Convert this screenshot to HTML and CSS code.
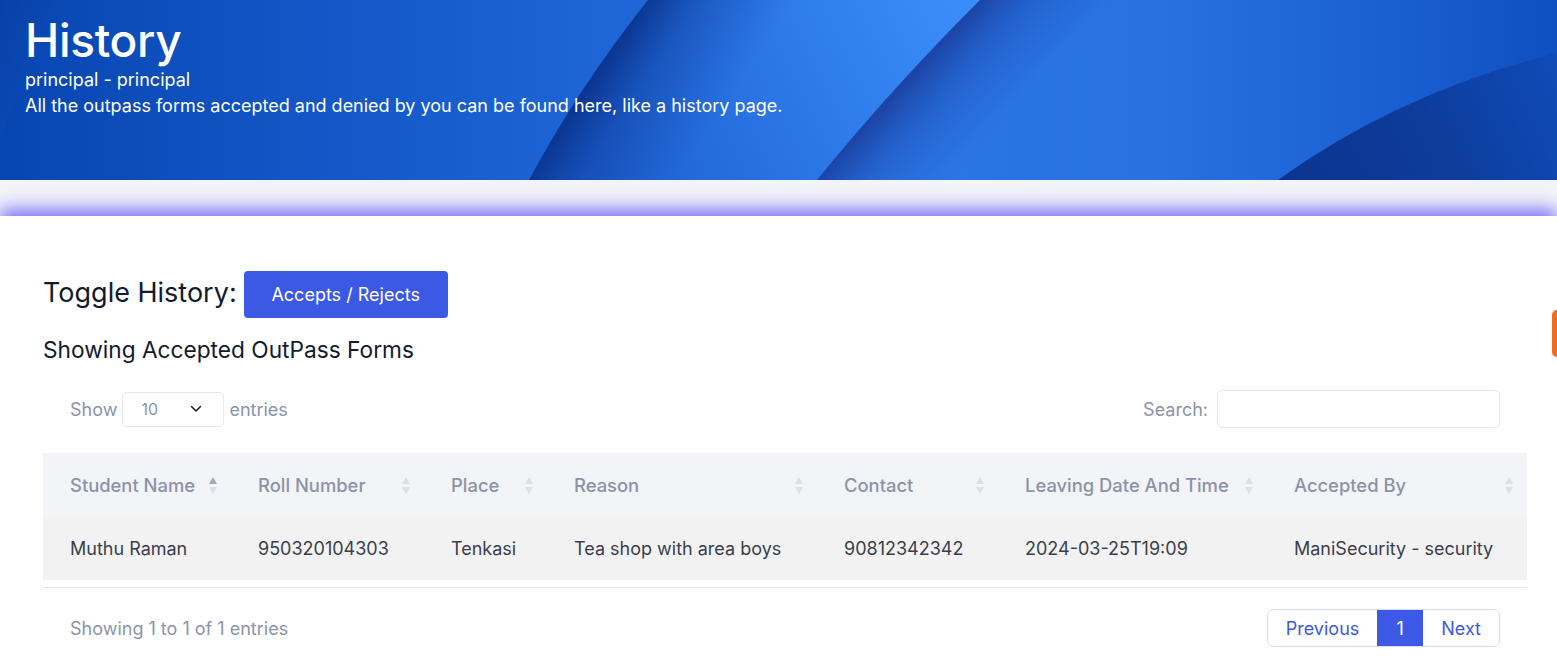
FILE: index.html
```html
<!DOCTYPE html>
<html lang="en">
<head>
<meta charset="utf-8">
<title>History</title>
<link rel="stylesheet" href="styles.css">
</head>
<body>
<header class="hero">
  <svg class="hero-bg" viewBox="0 0 1557 180" preserveAspectRatio="none" aria-hidden="true">
    <defs>
      <linearGradient id="gBase" x1="0" y1="0" x2="600" y2="0" gradientUnits="userSpaceOnUse">
        <stop offset="0" stop-color="#0746b2"/>
        <stop offset="1" stop-color="#1e65d7"/>
      </linearGradient>
      <linearGradient id="gB" x1="600" y1="180" x2="950" y2="0" gradientUnits="userSpaceOnUse">
        <stop offset="0" stop-color="#1d5fcf"/>
        <stop offset="0.5" stop-color="#2b76e7"/>
        <stop offset="1" stop-color="#3b8cfb"/>
      </linearGradient>
      <linearGradient id="gBs" x1="588" y1="90" x2="690" y2="158" gradientUnits="userSpaceOnUse">
        <stop offset="0" stop-color="#0a3590" stop-opacity="0.95"/>
        <stop offset="0.35" stop-color="#0f3f9f" stop-opacity="0.5"/>
        <stop offset="1" stop-color="#1446ad" stop-opacity="0"/>
      </linearGradient>
      <linearGradient id="gC" x1="900" y1="0" x2="1557" y2="0" gradientUnits="userSpaceOnUse">
        <stop offset="0" stop-color="#2b77e7"/>
        <stop offset="0.4" stop-color="#2771e1"/>
        <stop offset="0.75" stop-color="#1a5fd2"/>
        <stop offset="1" stop-color="#0f4fc0"/>
      </linearGradient>
      <linearGradient id="gCs" x1="898" y1="90" x2="972" y2="157" gradientUnits="userSpaceOnUse">
        <stop offset="0" stop-color="#1a3f9f" stop-opacity="0.9"/>
        <stop offset="0.4" stop-color="#1d4cb3" stop-opacity="0.45"/>
        <stop offset="1" stop-color="#2256c0" stop-opacity="0"/>
      </linearGradient>
      <linearGradient id="gD" x1="1290" y1="180" x2="1557" y2="60" gradientUnits="userSpaceOnUse">
        <stop offset="0" stop-color="#0b3590"/>
        <stop offset="0.5" stop-color="#0d3c9b"/>
        <stop offset="1" stop-color="#104bb8"/>
      </linearGradient>
      <linearGradient id="gA" x1="0" y1="0" x2="80" y2="40" gradientUnits="userSpaceOnUse">
        <stop offset="0" stop-color="#0a3e9e"/>
        <stop offset="1" stop-color="#0b4dbd"/>
      </linearGradient>
    </defs>
    <rect width="1557" height="180" fill="url(#gBase)"/>
    <path d="M0 0 H66 Q30 60 0 140 Z" fill="url(#gA)" opacity="0.6"/>
    <path d="M648 0 Q580 85 529 180 H1557 V0 Z" fill="url(#gB)"/>
    <path d="M648 0 Q580 85 529 180 H1557 V0 Z" fill="url(#gBs)"/>
    <path d="M980 0 Q890 90 817 180 H1557 V0 Z" fill="url(#gC)"/>
    <path d="M980 0 Q890 90 817 180 H1557 V0 Z" fill="url(#gCs)"/>
    <path d="M1278 180 Q1400 92 1557 53 V180 Z" fill="url(#gD)"/>
  </svg>
  <div class="hero-text">
    <h1 class="hero-title">History</h1>
    <p class="hero-user">principal - principal</p>
    <p class="hero-desc">All the outpass forms accepted and denied by you can be found here, like a history page.</p>
  </div>
</header>
<div class="band"></div>
<main class="main">
  <div class="toggle-row">
    <span class="toggle-label">Toggle History:</span>
    <button class="btn-primary" type="button">Accepts / Rejects</button>
  </div>
  <h2 class="section-title">Showing Accepted OutPass Forms</h2>
  <div class="dt-wrapper">
    <div class="dt-top">
      <label class="dt-length">Show
        <span class="select-box"><span>10</span>
          <svg class="chev" viewBox="0 0 12 8" width="12" height="8" aria-hidden="true"><path d="M1.5 1.5 L6 6 L10.5 1.5" fill="none" stroke="#222" stroke-width="1.6" stroke-linecap="round" stroke-linejoin="round"/></svg>
        </span>
        entries</label>
      <label class="dt-search">Search: <span class="search-input"></span></label>
    </div>
    <div class="dt-scroll">
      <table class="dt-table">
        <thead>
          <tr>
            <th class="c1 sorted">Student Name<span class="sort"><i class="up"></i><i class="down"></i></span></th>
            <th class="c2">Roll Number<span class="sort"><i class="up"></i><i class="down"></i></span></th>
            <th class="c3">Place<span class="sort"><i class="up"></i><i class="down"></i></span></th>
            <th class="c4">Reason<span class="sort"><i class="up"></i><i class="down"></i></span></th>
            <th class="c5">Contact<span class="sort"><i class="up"></i><i class="down"></i></span></th>
            <th class="c6">Leaving Date And Time<span class="sort"><i class="up"></i><i class="down"></i></span></th>
            <th class="c7">Accepted By<span class="sort"><i class="up"></i><i class="down"></i></span></th>
          </tr>
        </thead>
        <tbody>
          <tr>
            <td>Muthu Raman</td>
            <td>950320104303</td>
            <td>Tenkasi</td>
            <td>Tea shop with area boys</td>
            <td>90812342342</td>
            <td>2024-03-25T19:09</td>
            <td>ManiSecurity - security</td>
          </tr>
        </tbody>
      </table>
    </div>
    <div class="dt-bottom">
      <div class="dt-info">Showing 1 to 1 of 1 entries</div>
      <nav class="pager">
        <a class="page">Previous</a>
        <a class="page active">1</a>
        <a class="page">Next</a>
      </nav>
    </div>
  </div>
</main>
<div class="side-tab"></div>
</body>
</html>
```
FILE: styles.css
```css
* { box-sizing: border-box; }
html, body { margin: 0; padding: 0; }
body {
  font-family: Inter, "Noto Sans", "Liberation Sans", sans-serif;
  background: #ffffff;
  color: #111827;
  overflow: hidden;
}
.hero {
  position: relative;
  height: 180px;
  overflow: hidden;
  color: #fff;
}
.hero-bg {
  position: absolute;
  inset: 0;
  width: 100%;
  height: 100%;
  display: block;
}
.hero-text {
  position: relative;
  padding: 14px 0 0 25px;
}
.hero-title {
  margin: 0;
  font-size: 46px;
  font-weight: 500;
  line-height: 52px;
  letter-spacing: -0.3px;
}
.hero-user {
  margin: 2px 0 0;
  font-size: 18px;
  line-height: 24px;
}
.hero-desc {
  margin: 2px 0 0;
  font-size: 18px;
  line-height: 24px;
}
.band {
  height: 36px;
  background: #f3f4f9;
}
.main {
  position: relative;
  background: #fff;
  box-shadow: 0 -7px 17px rgba(100, 90, 250, 0.85);
  padding: 55px 30px 40px 43px;
  min-height: 447px;
}
.toggle-row {
  display: flex;
  align-items: center;
  gap: 7px;
}
.toggle-label {
  font-size: 27px;
  color: #141a2e;
  padding-bottom: 5px;
}
.btn-primary {
  font-family: inherit;
  width: 204px;
  height: 47px;
  border: 0;
  border-radius: 4px;
  background: #3c59e5;
  color: #fff;
  font-size: 18px;
}
.section-title {
  margin: 17px 0 0;
  font-size: 22.7px;
  font-weight: 400;
  color: #141a2e;
  line-height: 30px;
}
.dt-wrapper {
  margin-top: 25px;
}
.dt-top {
  display: flex;
  justify-content: space-between;
  align-items: center;
  padding: 0 27px;
  color: #8b94a8;
  font-size: 18px;
}
.dt-length {
  display: flex;
  align-items: center;
  gap: 5px;
}
.select-box {
  display: inline-flex;
  align-items: center;
  justify-content: space-between;
  width: 102px;
  height: 35px;
  border: 1px solid #e6e8ec;
  border-radius: 5px;
  padding: 0 21px 0 18px;
  font-size: 16px;
  color: #8b94a8;
}
.dt-search {
  display: flex;
  align-items: center;
  gap: 9px;
}
.search-input {
  display: block;
  width: 283px;
  height: 38px;
  border: 1px solid #e6e8ec;
  border-radius: 5px;
}
.dt-scroll {
  margin-top: 25px;
  border-bottom: 1px solid #e5e7eb;
  padding-bottom: 7px;
}
.dt-table {
  width: 1484px;
  border-collapse: collapse;
  table-layout: fixed;
  font-size: 18px;
}
.dt-table th {
  position: relative;
  height: 64px;
  padding: 0 27px;
  text-align: left;
  font-weight: 500;
  font-size: 18.4px;
  color: #8b93a7;
  background: #f3f4f8;
  white-space: nowrap;
}
.dt-table td {
  height: 63px;
  padding: 0 27px;
  color: #3a3f4b;
  background: #f2f2f2;
  white-space: nowrap;
}
.c1 { width: 188px; }
.c2 { width: 193px; }
.c3 { width: 123px; }
.c4 { width: 270px; }
.c5 { width: 181px; }
.c6 { width: 269px; }
.c7 { width: 260px; }
.sort {
  position: absolute;
  right: 14px;
  top: 50%;
  margin-top: -8px;
  display: flex;
  flex-direction: column;
  gap: 3px;
}
.sort i {
  display: block;
  width: 0;
  height: 0;
  border-left: 4.5px solid transparent;
  border-right: 4.5px solid transparent;
}
.sort .up { border-bottom: 7px solid #dcdfe5; }
.sort .down { border-top: 7px solid #dcdfe5; }
.sorted .sort .up { border-bottom-color: #a3a9ba; }
.dt-bottom {
  display: flex;
  justify-content: space-between;
  align-items: center;
  padding: 21px 27px 0;
}
.dt-info {
  color: #8b94a8;
  font-size: 18px;
}
.pager {
  display: flex;
  height: 38px;
  border: 1px solid #d6def7;
  border-radius: 6px;
  overflow: hidden;
}
.page {
  display: flex;
  align-items: center;
  justify-content: center;
  padding: 0 18px;
  color: #3c59e5;
  font-size: 18px;
}
.page.active {
  background: #3c59e5;
  color: #fff;
  width: 46px;
  padding: 0;
}
.side-tab {
  position: absolute;
  right: 0;
  top: 310px;
  width: 5px;
  height: 47px;
  background: #f26b1d;
  border-radius: 6px 0 0 6px;
}
```
